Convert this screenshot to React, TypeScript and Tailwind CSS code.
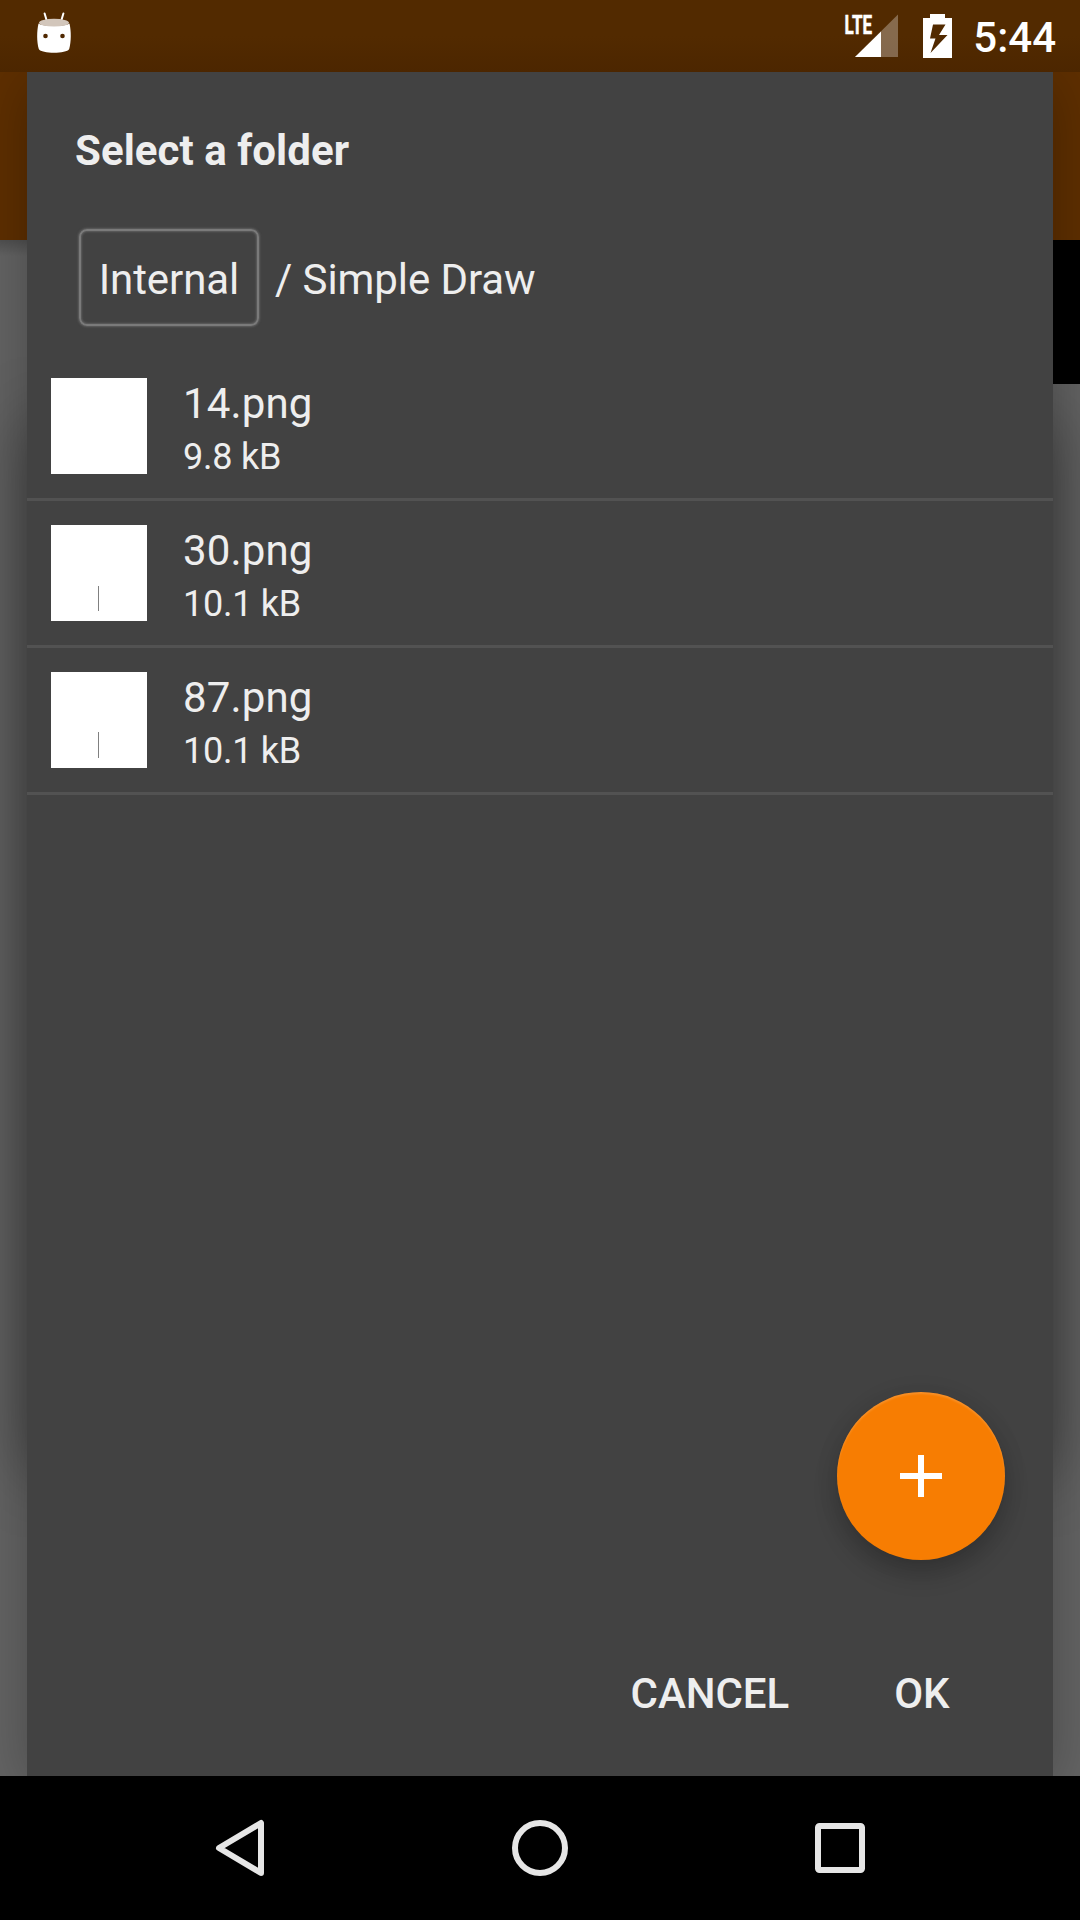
type FileEntry = { name: string; size: string; mark: string | null };

const files: FileEntry[] = [
  { name: "14.png", size: "9.8 kB", mark: null },
  { name: "30.png", size: "10.1 kB", mark: "M47.5 61v25" },
  { name: "87.png", size: "10.1 kB", mark: "M47.5 60v26" },
];

function StatusBar() {
  return (
    <header className="flex h-[72px] shrink-0 items-start justify-between bg-linear-to-b from-[#522a00] from-50% to-[#4c2600] pl-9 pr-6">
      <svg width="36" height="60" viewBox="36 0 36 60">
        <path d="M44.6 13.5l2.4 8M63.4 13.5l-2.4 8" stroke="#fff" strokeWidth="2" strokeLinecap="round" />
        <path d="M38.5 23.5C42 26.8 66 26.8 69.5 23.5C71.3 31 71.3 42 69.2 49C66.5 54 41.5 54 38.8 49C36.7 42 36.7 31 38.5 23.5Z" fill="#fff" />
        <ellipse cx="54" cy="22.7" rx="15" ry="3.9" fill="#d2c6bb" />
        <circle cx="45.5" cy="36" r="2.3" fill="#502800" />
        <circle cx="62.5" cy="36" r="2.3" fill="#502800" />
      </svg>
      <div className="flex items-start">
        <svg width="56" height="60" viewBox="844 0 56 60">
          <path d="M898 14.5V57H855z" fill="#fff" fillOpacity="0.3" />
          <path d="M881 31.5V57H855z" fill="#fff" />
          <text x="844.6" y="33.5" textLength="27.5" lengthAdjust="spacingAndGlyphs" fontFamily="Roboto" fontWeight="700" fontSize="25.5" fill="#fff" stroke="#fff" strokeWidth="0.5">LTE</text>
        </svg>
        <svg className="ml-[22px]" width="32" height="60" viewBox="922 0 32 60">
          <path fillRule="evenodd" fill="#fff" d="M930 14h15v4h7v40h-29V18h7zM933 24.500l-3 14h5.500l-5 14.500l17-18h-8.500l6.500-10.500z" />
        </svg>
        <span className="ml-[19px] mt-[13px] text-[42px] leading-[50px] font-medium text-white">5:44</span>
      </div>
    </header>
  );
}

function Backdrop() {
  return (
    <div className="absolute inset-0 flex flex-col">
      <div className="h-[168px] bg-[#5e2f00]" />
      <div className="relative flex h-36 justify-end bg-[#646464]">
        <div className="h-4 w-full bg-linear-to-b from-black/20 to-transparent" />
      </div>
      <div className="grow bg-[#646464]" />
      <div className="absolute inset-x-[27px] top-[350px] h-[1050px] shadow-[0_0_60px_rgba(0,0,0,0.38)]" />
      <div className="absolute inset-x-[27px] inset-y-0 shadow-[0_10px_54px_rgba(0,0,0,0.28)]" />
      <div className="absolute right-0 top-[168px] h-36 w-40 bg-black" />
    </div>
  );
}

function Breadcrumbs() {
  return (
    <nav className="ml-[51px] mt-[51px] flex h-[100px] items-center text-[42px] leading-[50px]">
      <button className="ml-px flex h-[97px] w-[180px] items-center justify-center rounded-[8px] border-2 border-[#7a7a7a] pt-[5px] tracking-[-0.080px] shadow-[0_0_2px_1px_#606060,inset_0_0_2px_1px_#606060]">
        Internal
      </button>
      <span className="ml-4 mt-[5px] whitespace-pre tracking-[-0.080px]">/ Simple Draw</span>
    </nav>
  );
}

function FileRow({ file }: { file: FileEntry }) {
  return (
    <li className="flex h-[147px] border-b-[3px] border-[#525252] pl-6 pt-6">
      <svg className="bg-white" width="96" height="96" viewBox="0 0 96 96">
        {file.mark && <path d={file.mark} stroke="#808080" strokeWidth="1" />}
      </svg>
      <div className="ml-9 flex flex-col">
        <span className="mt-px text-[42px] leading-[50px] tracking-[0.15px]">{file.name}</span>
        <span className="mt-[7px] text-[36px] leading-[42px] tracking-[-0.25px]">{file.size}</span>
      </div>
    </li>
  );
}

function Dialog() {
  return (
    <section className="relative mx-[27px] flex grow flex-col bg-[#424242] text-[#eee]">
      <h1 className="ml-12 mt-[54px] text-[42px] leading-[50px] font-bold tracking-[0.050px]">Select a folder</h1>
      <Breadcrumbs />
      <ul className="mt-[27px]">
        {files.map((f) => <FileRow key={f.name} file={f} />)}
      </ul>
      <button className="absolute right-12 bottom-[216px] flex size-[168px] items-center justify-center rounded-full bg-[#f77d02] shadow-[0_14px_24px_rgba(0,0,0,0.2),0_2px_24px_rgba(0,0,0,0.08),inset_0_2px_2px_rgba(255,255,255,0.15)]">
        <svg width="42" height="42" viewBox="0 0 42 42">
          <path d="M18 0h6v18h18v6H24v18h-6V24H0v-6h18z" fill="#fff" />
        </svg>
      </button>
      <footer className="mt-auto mb-[57px] mr-[103.5px] flex justify-end gap-[105px] text-[42px] leading-[50px] font-medium tracking-[-0.050px]">
        <button>CANCEL</button>
        <button>OK</button>
      </footer>
    </section>
  );
}

function NavigationBar() {
  return (
    <nav className="flex h-36 shrink-0 items-center justify-between bg-black px-[210px]">
      <svg width="60" height="60" viewBox="210 1818 60 60" fill="none" stroke="#e6e6e6" strokeWidth="6">
        <path d="M219 1848L261 1823V1873Z" strokeLinejoin="round" />
      </svg>
      <svg width="60" height="60" viewBox="0 0 60 60" fill="none" stroke="#e6e6e6" strokeWidth="6">
        <circle cx="30" cy="30" r="25" />
      </svg>
      <svg width="60" height="60" viewBox="0 0 60 60" fill="none" stroke="#e6e6e6" strokeWidth="6">
        <rect x="8" y="8" width="44" height="44" rx="1.500" />
      </svg>
    </nav>
  );
}

export default function App() {
  return (
    <div className="flex h-[1920px] w-[1080px] flex-col overflow-hidden font-['Roboto',sans-serif]">
      <StatusBar />
      <main className="relative flex grow flex-col overflow-hidden">
        <Backdrop />
        <Dialog />
      </main>
      <NavigationBar />
    </div>
  );
}
